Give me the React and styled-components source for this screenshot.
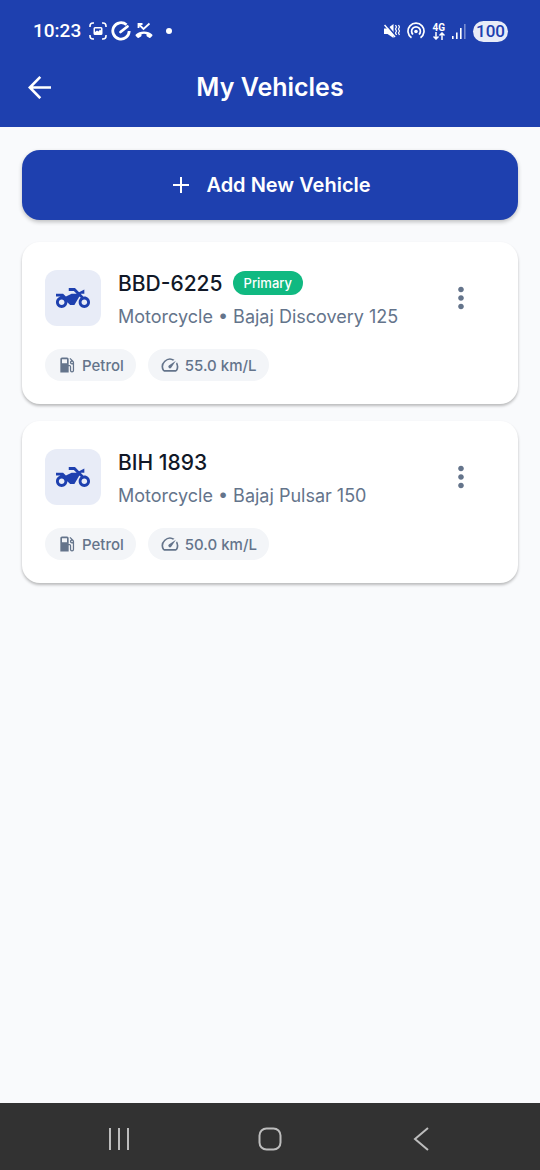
import React from 'react'
import styled, { createGlobalStyle } from 'styled-components'
import {
    MdLocalGasStation,
    MdMoreVert,
    MdOutlineSpeed,
    MdTwoWheeler,
} from 'react-icons/md'

const GlobalStyle = createGlobalStyle`
* {
    box-sizing: border-box;
}
body {
    margin: 0;
    background-color: #f9fafc;
    font-family: Inter, Roboto, sans-serif;
}
button {
    font-family: inherit;
    border: none;
    padding: 0;
    cursor: pointer;
}
`

const Screen = styled.div`
min-height: 100vh;
display: flex;
flex-direction: column;
`

const TopArea = styled.header`
background-color: #1e40af;
color: #fff;
`

const StatusBar = styled.div`
display: flex;
align-items: center;
justify-content: space-between;
height: 48px;
padding: 14px 32px 0 33px;
`

const StatusGroup = styled.div`
display: flex;
align-items: center;
gap: ${props => props.$gap};
`

const Clock = styled.span`
font-family: Roboto, sans-serif;
font-size: 19px;
font-weight: 500;
line-height: 24px;
margin-right: 4px;
`

const Battery = styled.span`
font-family: Roboto, sans-serif;
font-size: 17px;
font-weight: 500;
line-height: 21px;
padding: 0 3px;
border-radius: 11px;
background-color: #e8ecf8;
color: #1e40af;
`

const NetworkLabel = styled.span`
display: flex;
flex-direction: column;
align-items: center;
font-family: Roboto, sans-serif;
font-size: 10px;
font-weight: 700;
line-height: 9px;
`

const TitleBar = styled.div`
display: grid;
grid-template-columns: 32px 1fr 32px;
align-items: center;
height: 79px;
padding: 0 24px 2px;
`

const IconButton = styled.button`
display: flex;
align-items: center;
justify-content: center;
width: 32px;
height: 32px;
background: none;
color: ${props => props.$color};
font-size: 34px;

svg {
    flex-shrink: 0;
}
`

const MenuButton = styled(IconButton)`
height: 56px;
`

const Title = styled.h1`
margin: 0;
font-size: 25px;
font-weight: 600;
line-height: 32px;
text-align: center;
`

const Content = styled.main`
flex: 1;
display: flex;
flex-direction: column;
padding: 23px 22px;
`

const AddButton = styled.button`
display: flex;
align-items: center;
justify-content: center;
gap: 17px;
height: 70px;
margin-bottom: 22px;
padding-left: 4px;
border-radius: 18px;
background-color: #1e40af;
color: #fff;
font-size: 20px;
font-weight: 600;
box-shadow: 0 2px 4px rgba(0, 0, 0, .24);
`

const VehicleList = styled.ul`
display: flex;
flex-direction: column;
gap: 17px;
margin: 0;
padding: 0;
list-style: none;
`

const Card = styled.li`
display: flex;
flex-direction: column;
gap: 20px;
padding: 28px 23px 23px;
border-radius: 18px;
background-color: #fff;
box-shadow: 0 2px 3px rgba(0, 0, 0, .26);
`

const CardTop = styled.div`
display: flex;
align-items: flex-start;
gap: 17px;
padding-right: 18px;
`

const IconBox = styled.div`
display: flex;
align-items: center;
justify-content: center;
width: 56px;
height: 56px;
border-radius: 12px;
background-color: #e8ecf7;
color: #1e40af;
font-size: 34px;
`

const Info = styled.div`
flex: 1;
padding-top: 1px;
`

const NameRow = styled.div`
display: flex;
align-items: center;
gap: 10px;
height: 24px;
margin-bottom: 10px;
`

const Name = styled.h2`
margin: 0;
font-size: 21px;
font-weight: 500;
color: #111827;
`

const Badge = styled.span`
padding: 0 11px;
border-radius: 12px;
background-color: #10b981;
color: #fff;
font-size: 13px;
font-weight: 500;
line-height: 24px;
`

const Model = styled.p`
margin: 0;
font-size: 18px;
line-height: 24px;
color: #64748b;
`

const Chips = styled.div`
display: flex;
gap: 12px;
`

const Chip = styled.span`
display: flex;
align-items: center;
gap: 5px;
height: 32px;
padding: 0 12px;
border-radius: 16px;
background-color: #f3f5f8;
color: #64748b;
font-size: 15px;
font-weight: 500;

svg {
    font-size: 20px;
}
`

const NavBar = styled.nav`
display: flex;
align-items: center;
justify-content: space-around;
height: 67px;
padding: 4px 44px 0;
background-color: #323232;
`

const vehicles = [
    { plate: 'BBD-6225', model: 'Motorcycle • Bajaj Discovery 125', fuel: 'Petrol', mileage: '55.0 km/L', primary: true },
    { plate: 'BIH 1893', model: 'Motorcycle • Bajaj Pulsar 150', fuel: 'Petrol', mileage: '50.0 km/L', primary: false },
]

const ScreenshotIcon = () => (
    <svg width="18" height="18" viewBox="0 0 18 18" fill="none" stroke="#fff" strokeWidth="1.6">
        <path d="M1 5V4a3 3 0 0 1 3-3h1M13 1h1a3 3 0 0 1 3 3v1M17 13v1a3 3 0 0 1-3 3h-1M5 17H4a3 3 0 0 1-3-3v-1" />
        <path fill="#fff" fillRule="evenodd" stroke="none" d="M6 5h6a1.500 1.500 0 0 1 1.500 1.500v5A1.500 1.500 0 0 1 12 13H6a1.500 1.500 0 0 1-1.500-1.500v-5A1.500 1.500 0 0 1 6 5zm0 1.500v3.500l2-1.500 1.500 1 1.500-2 1 1V6.500z" />
    </svg>
)

const CircleIcon = () => (
    <svg width="20" height="20" viewBox="0 0 20 20" fill="none" stroke="#fff" strokeWidth="2.8">
        <path d="M15.500 3.800A8.200 8.200 0 1 0 18.200 10" />
        <path d="M9.500 11l7-5.500" strokeLinecap="round" />
    </svg>
)

const MissedCallIcon = () => (
    <svg width="18" height="18" viewBox="0 0 18 18" fill="none" stroke="#fff">
        <path d="M3.500 6V2H7.500M3.500 2l5 5L14.500 1.500" strokeWidth="1.8" />
        <path fill="#fff" stroke="none" d="M9 9.500c3.400 0 6.200 1.200 8.200 3.100.4.400.4.900 0 1.300l-1.800 1.800c-.3.300-.8.400-1.200.1l-2.200-1.400a1 1 0 0 1-.5-.9v-1.300a9 9 0 0 0-5 0v1.300c0 .4-.2.700-.5.900l-2.200 1.400c-.4.300-.9.200-1.200-.1L.8 13.900c-.4-.4-.4-.9 0-1.300C2.800 10.700 5.600 9.500 9 9.500z" />
    </svg>
)

const DotIcon = () => (
    <svg width="6" height="6" viewBox="0 0 6 6">
        <circle cx="3" cy="3" r="3" fill="#fff" />
    </svg>
)

const MuteIcon = () => (
    <svg width="16" height="18" viewBox="0 0 16 18" fill="none" stroke="#fff">
        <path fill="#fff" stroke="none" d="M0 6.500h3.500L9.500 2v14L3.500 12H0z" />
        <path d="M1.500 1.500l10 12.500" stroke="#1e40af" strokeWidth="2" />
        <path d="M.5 3l10.500 12" strokeWidth="1.5" />
        <path d="M11.500 3l1 2-1 2 1 2-1 2 1 2M14.500 3l1 2-1 2 1 2-1 2 1 2" strokeWidth="1.2" />
    </svg>
)

const HotspotIcon = () => (
    <svg width="18" height="18" viewBox="0 0 18 18" fill="none" stroke="#fff" strokeWidth="1.7">
        <path d="M4.500 15.800a8 8 0 1 1 9 0" />
        <path d="M6 12.500a4.400 4.400 0 1 1 6 0" />
        <circle cx="9" cy="9.5" r="1.8" fill="#fff" stroke="none" />
    </svg>
)

const DataArrows = () => (
    <svg width="12" height="8" viewBox="0 0 12 8" fill="none" stroke="#fff" strokeWidth="1.5">
        <path d="M3 0v7M.5 4.500L3 7l2.500-2.500M9 8V1M6.500 3.500L9 1l2.500 2.500" />
    </svg>
)

const SignalIcon = () => (
    <svg width="14" height="15" viewBox="0 0 14 15" fill="#fff">
        <rect x="0" y="12" width="1.6" height="3" />
        <rect x="4" y="8.5" width="1.6" height="6.5" />
        <rect x="8" y="4" width="1.6" height="11" />
        <rect x="12" y="0" width="1.6" height="15" opacity=".4" />
    </svg>
)

const ArrowIcon = () => (
    <svg width="24" height="24" viewBox="0 0 24 24" fill="none" stroke="#fff" strokeWidth="2.6">
        <path d="M23 12.500H2M12.300 1.800L1.800 12.500l10.500 10.700" />
    </svg>
)

const PlusIcon = () => (
    <svg width="16" height="16" viewBox="0 0 16 16" stroke="#fff" strokeWidth="2">
        <path d="M8 0v16M0 8h16" />
    </svg>
)

const RecentsIcon = () => (
    <svg width="22" height="22" viewBox="0 0 22 22" stroke="#bdbdbd" strokeWidth="2">
        <path d="M2 0v22M11 0v22M20 0v22" />
    </svg>
)

const HomeIcon = () => (
    <svg width="24" height="24" viewBox="0 0 24 24" fill="none" stroke="#bdbdbd" strokeWidth="2">
        <rect x="1.5" y="1.5" width="21" height="21" rx="7" />
    </svg>
)

const BackIcon = () => (
    <svg width="16" height="24" viewBox="0 0 16 24" fill="none" stroke="#bdbdbd" strokeWidth="2">
        <path d="M15 1L2 12l13 11" />
    </svg>
)

const VehicleCard = ({ vehicle }) => (
    <Card>
        <CardTop>
            <IconBox><MdTwoWheeler /></IconBox>
            <Info>
                <NameRow>
                    <Name>{vehicle.plate}</Name>
                    {vehicle.primary && <Badge>Primary</Badge>}
                </NameRow>
                <Model>{vehicle.model}</Model>
            </Info>
            <MenuButton $color="#64748b" aria-label="Vehicle options"><MdMoreVert /></MenuButton>
        </CardTop>
        <Chips>
            <Chip><MdLocalGasStation />{vehicle.fuel}</Chip>
            <Chip><MdOutlineSpeed />{vehicle.mileage}</Chip>
        </Chips>
    </Card>
)

const App = () => {
    return (
        <Screen>
            <GlobalStyle />
            <TopArea>
                <StatusBar>
                    <StatusGroup $gap="13px">
                        <StatusGroup $gap="4px">
                            <Clock>10:23</Clock>
                            <ScreenshotIcon />
                            <CircleIcon />
                            <MissedCallIcon />
                        </StatusGroup>
                        <DotIcon />
                    </StatusGroup>
                    <StatusGroup $gap="7px">
                        <MuteIcon />
                        <HotspotIcon />
                        <NetworkLabel>4G<DataArrows /></NetworkLabel>
                        <SignalIcon />
                        <Battery>100</Battery>
                    </StatusGroup>
                </StatusBar>
                <TitleBar>
                    <IconButton $color="#fff" aria-label="Go back"><ArrowIcon /></IconButton>
                    <Title>My Vehicles</Title>
                </TitleBar>
            </TopArea>
            <Content>
                <AddButton><PlusIcon />Add New Vehicle</AddButton>
                <VehicleList>
                    {vehicles.map(vehicle => <VehicleCard key={vehicle.plate} vehicle={vehicle} />)}
                </VehicleList>
            </Content>
            <NavBar>
                <IconButton aria-label="Recent apps"><RecentsIcon /></IconButton>
                <IconButton aria-label="Home"><HomeIcon /></IconButton>
                <IconButton aria-label="Back"><BackIcon /></IconButton>
            </NavBar>
        </Screen>
    )
}

export default App
